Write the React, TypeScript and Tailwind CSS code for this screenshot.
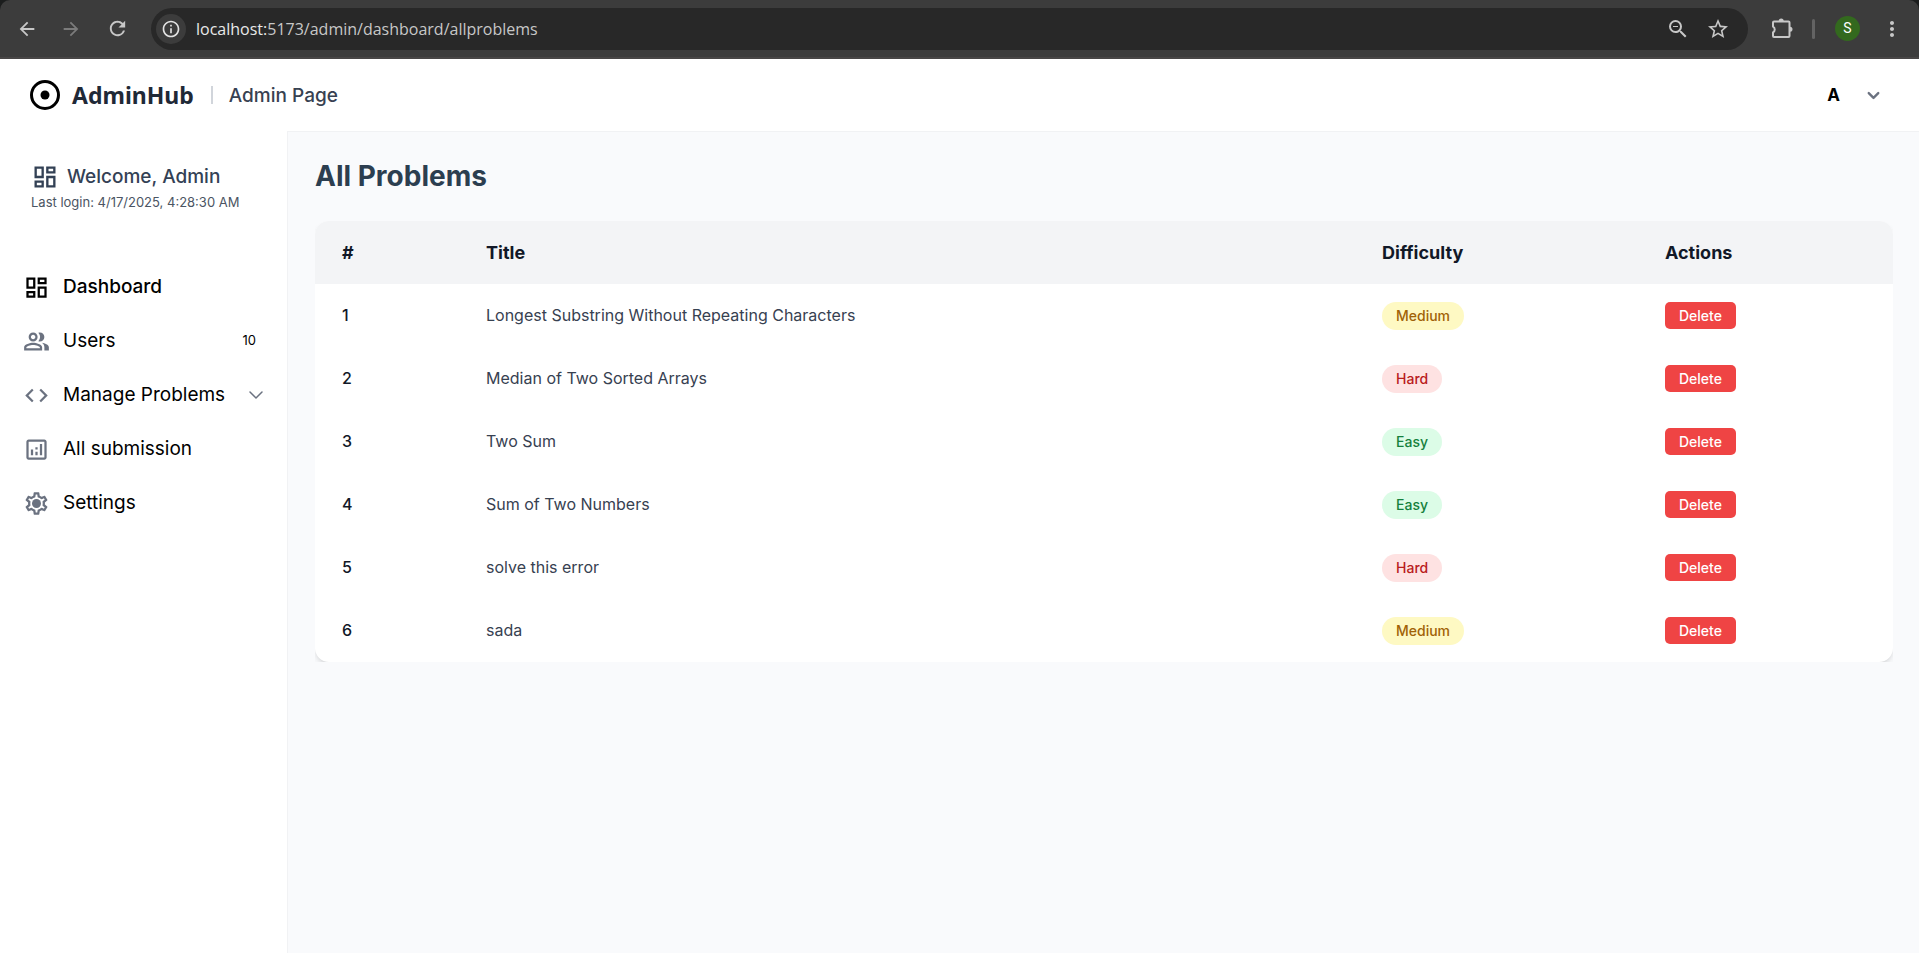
import type { ReactNode } from "react";
import { ChevronDown } from "lucide-react";
import {
  MdArrowBack,
  MdArrowForward,
  MdCode,
  MdInfoOutline,
  MdMoreVert,
  MdOutlineAnalytics,
  MdOutlineDashboard,
  MdOutlinePeopleAlt,
  MdRefresh,
  MdStarOutline,
  MdZoomOut,
} from "react-icons/md";

type Difficulty = "Easy" | "Medium" | "Hard";

const problems: { title: string; difficulty: Difficulty }[] = [
  { title: "Longest Substring Without Repeating Characters", difficulty: "Medium" },
  { title: "Median of Two Sorted Arrays", difficulty: "Hard" },
  { title: "Two Sum", difficulty: "Easy" },
  { title: "Sum of Two Numbers", difficulty: "Easy" },
  { title: "solve this error", difficulty: "Hard" },
  { title: "sada", difficulty: "Medium" },
];

const badgeStyles: Record<Difficulty, string> = {
  Easy: "bg-[#dcfce7] text-[#15803d]",
  Medium: "bg-[#fef9c3] text-[#a16207]",
  Hard: "bg-[#fee2e2] text-[#b91c1c]",
};

function PuzzleIcon() {
  return (
    <svg width="24" height="24" viewBox="0 0 24 24" fill="none" aria-hidden="true">
      <path
        d="M4 4.5h14.5q1 0 1 1v13.5q0 1-1 1H4q-1 0-1-1v-3.6a3.3 3.3 0 0 0 0-5.8V5.5q0-1 1-1z"
        stroke="currentColor"
        strokeWidth="2"
        strokeLinejoin="round"
      />
      <path d="M8.7 4a2.5 2.5 0 0 1 5 0zM20 9.7a2.5 2.5 0 0 1 0 5z" fill="currentColor" />
    </svg>
  );
}

function GearIcon() {
  return (
    <svg width="27" height="27" viewBox="0 0 24 24" fill="currentColor" aria-hidden="true">
      <path d="M19.43 12.98c.04-.32.07-.64.07-.98 0-.34-.03-.66-.07-.98l2.11-1.65c.19-.15.24-.42.12-.64l-2-3.46c-.09-.16-.26-.25-.44-.25-.06 0-.12.01-.17.03l-2.49 1c-.52-.4-1.08-.73-1.69-.98l-.38-2.65C14.46 2.18 14.25 2 14 2h-4c-.25 0-.46.18-.49.42l-.38 2.65c-.61.25-1.17.59-1.69.98l-2.49-1c-.06-.02-.12-.03-.18-.03-.17 0-.34.09-.43.25l-2 3.46c-.13.22-.07.49.12.64l2.11 1.65c-.04.32-.07.65-.07.98 0 .33.03.66.07.98l-2.11 1.65c-.19.15-.24.42-.12.64l2 3.46c.09.16.26.25.44.25.06 0 .12-.01.17-.03l2.49-1c.52.4 1.08.73 1.69.98l.38 2.65c.03.24.24.42.49.42h4c.25 0 .46-.18.49-.42l.38-2.65c.61-.25 1.17-.59 1.69-.98l2.49 1c.06.02.12.03.18.03.17 0 .34-.09.43-.25l2-3.46c.12-.22.07-.49-.12-.64l-2.11-1.65zm-1.98-1.71c.04.31.05.52.05.73 0 .21-.02.43-.05.73l-.14 1.13.89.7 1.08.84-.7 1.21-1.27-.51-1.04-.42-.9.68c-.43.32-.84.56-1.25.73l-1.06.43-.16 1.13-.2 1.35h-1.4l-.19-1.35-.16-1.13-1.06-.43c-.43-.18-.83-.41-1.23-.71l-.91-.7-1.06.43-1.27.51-.7-1.21 1.08-.84.89-.7-.14-1.13c-.03-.31-.05-.54-.05-.74s.02-.43.05-.73l.14-1.13-.89-.7-1.08-.84.7-1.21 1.27.51 1.04.42.9-.68c.43-.32.84-.56 1.25-.73l1.06-.43.16-1.13.2-1.35h1.39l.19 1.35.16 1.13 1.06.43c.43.18.83.41 1.23.71l.91.7 1.06-.43 1.27-.51.7 1.21-1.07.85-.89.7.14 1.13z" />
      <circle cx="12" cy="12" r="4" />
    </svg>
  );
}

function BrowserBar() {
  return (
    <div className="bg-[#1b1d1d] font-['Open_Sans',sans-serif]">
      <div className="flex h-[59px] items-center rounded-t-[10px] border-b-2 border-[#484646] bg-[#3c3c3c] px-[15px] text-[#c7c7c7]">
        <button type="button" aria-label="Back" className="mr-5 grid size-6 place-items-center">
          <MdArrowBack size={22} />
        </button>
        <button type="button" aria-label="Forward" className="mr-5 grid size-6 place-items-center text-[#7b7b7b]">
          <MdArrowForward size={22} />
        </button>
        <button type="button" aria-label="Reload" className="mr-5 grid size-7 place-items-center">
          <MdRefresh size={23} />
        </button>
        <div className="flex h-[42px] flex-1 items-center rounded-full bg-[#282828] pr-4 pl-[5px]">
          <button
            type="button"
            aria-label="Site information"
            className="grid size-[30px] place-items-center rounded-full bg-[#3c3c3c] text-[#e3e3e3]"
          >
            <MdInfoOutline size={20} />
          </button>
          <div className="ml-[10px] flex-1 text-[16px] text-[#c7c7c7]">
            <span className="text-[#e8e8e8]">localhost:</span>5173/admin/dashboard/allproblems
          </div>
          <button type="button" aria-label="Zoom" className="mr-4 grid size-6 place-items-center">
            <MdZoomOut size={24} />
          </button>
          <button type="button" aria-label="Bookmark" className="mr-[2px] grid size-6 place-items-center">
            <MdStarOutline size={24} />
          </button>
        </div>
        <button type="button" aria-label="Extensions" className="ml-[22px] grid size-6 place-items-center">
          <PuzzleIcon />
        </button>
        <div className="ml-[18px] h-5 w-[3px] rounded-full bg-[#636363]" />
        <button
          type="button"
          aria-label="Profile"
          className="ml-5 grid size-[25px] place-items-center rounded-full bg-[#33691e] font-['Roboto',sans-serif] text-[14px] text-white"
        >
          S
        </button>
        <button type="button" aria-label="Menu" className="ml-5 grid size-6 place-items-center">
          <MdMoreVert size={24} />
        </button>
      </div>
    </div>
  );
}

function NavItem({
  icon,
  label,
  active = false,
  children,
}: {
  icon: ReactNode;
  label: string;
  active?: boolean;
  children?: ReactNode;
}) {
  return (
    <li>
      <a href="#" className="flex h-[54px] items-center pr-[19px] pl-[23px]">
        <span className={active ? "text-black" : "text-[#6b7280]"}>{icon}</span>
        <span className={active ? "ml-[13px] flex-1 font-medium" : "ml-[13px] flex-1 whitespace-nowrap"}>{label}</span>
        {children}
      </a>
    </li>
  );
}

export default function App() {
  return (
    <div className="flex min-h-screen flex-col bg-white font-['Inter',sans-serif] text-black">
      <BrowserBar />

      <header className="flex h-[72px] items-center pr-9 pl-[30px]">
        <svg width="30" height="30" viewBox="0 0 30 30" aria-hidden="true">
          <circle cx="15" cy="15" r="13.5" fill="none" stroke="#000" strokeWidth="3" />
          <circle cx="15" cy="15" r="4.5" />
        </svg>
        <span className="ml-3 font-['Noto_Sans',sans-serif] text-[23px] leading-8 font-bold text-[#1f2937]">AdminHub</span>
        <span className="ml-[17px] h-[18px] w-[2px] bg-[#d1d5db]" />
        <span className="ml-4 pt-[2px] text-[19px] font-medium text-[#374151]">Admin Page</span>
        <button type="button" aria-label="Account menu" className="ml-auto flex items-center gap-6">
          <span className="pt-[2px] text-[17px] font-bold">A</span>
          <ChevronDown size={19} strokeWidth={3} className="text-[#6b7280]" />
        </button>
      </header>

      <div className="flex flex-1">
        <aside className="w-[287px] shrink-0 bg-white pt-8">
          <div className="pl-[31px]">
            <div className="flex h-7 items-center gap-2 text-[#334155]">
              <MdOutlineDashboard size={28} />
              <span className="text-[19px] font-medium">Welcome, Admin</span>
            </div>
            <p className="mt-px text-[13px] leading-5 text-[#4b5563]">Last login: 4/17/2025, 4:28:30 AM</p>
          </div>
          <nav className="mt-12 text-[19px]">
            <ul>
              <NavItem icon={<MdOutlineDashboard size={27} />} label="Dashboard" active />
              <NavItem icon={<MdOutlinePeopleAlt size={27} />} label="Users">
                <span className="mr-3 text-[13px]">10</span>
              </NavItem>
              <NavItem icon={<MdCode size={27} />} label="Manage Problems">
                <ChevronDown size={24} strokeWidth={1.5} className="text-[#6b7280]" />
              </NavItem>
              <NavItem icon={<MdOutlineAnalytics size={27} />} label="All submission" />
              <NavItem icon={<GearIcon />} label="Settings" />
            </ul>
          </nav>
        </aside>

        <main className="min-w-0 flex-1 border-t border-l border-[#f1f2f4] bg-[#f9fafc] pt-6 pr-[26px] pl-[27px]">
          <h1 className="text-[28px] leading-10 font-bold text-[#2c3e50]">All Problems</h1>
          <div className="mt-[25px] overflow-hidden">
            <div className="overflow-hidden rounded-[14px] bg-white shadow-md">
              <table className="w-full table-fixed text-left">
                <thead className="bg-[#f3f4f6] text-[18px] text-[#111827]">
                  <tr className="h-[63px]">
                    <th className="w-[144px] px-[27px] font-bold">#</th>
                    <th className="px-[27px] font-bold">Title</th>
                    <th className="w-[283px] px-[27px] font-bold">Difficulty</th>
                    <th className="w-[255px] px-[27px] font-bold">Actions</th>
                  </tr>
                </thead>
                <tbody className="text-[16px]">
                  {problems.map((problem, index) => (
                    <tr key={problem.title} className="h-[63px]">
                      <td className="px-[27px] pb-[2px] font-medium text-[#111827]">{index + 1}</td>
                      <td className="px-[27px] pb-[2px] text-[#374151]">{problem.title}</td>
                      <td className="px-[27px]">
                        <div className="flex">
                          <span
                            className={`flex h-7 items-center rounded-full px-[14px] text-[14px] font-medium ${badgeStyles[problem.difficulty]}`}
                          >
                            {problem.difficulty}
                          </span>
                        </div>
                      </td>
                      <td className="px-[27px]">
                        <button
                          type="button"
                          className="flex h-[27px] items-center rounded-[5px] bg-[#ef4444] px-[14px] text-[14px] font-medium text-white"
                        >
                          Delete
                        </button>
                      </td>
                    </tr>
                  ))}
                </tbody>
              </table>
            </div>
          </div>
        </main>
      </div>
    </div>
  );
}
